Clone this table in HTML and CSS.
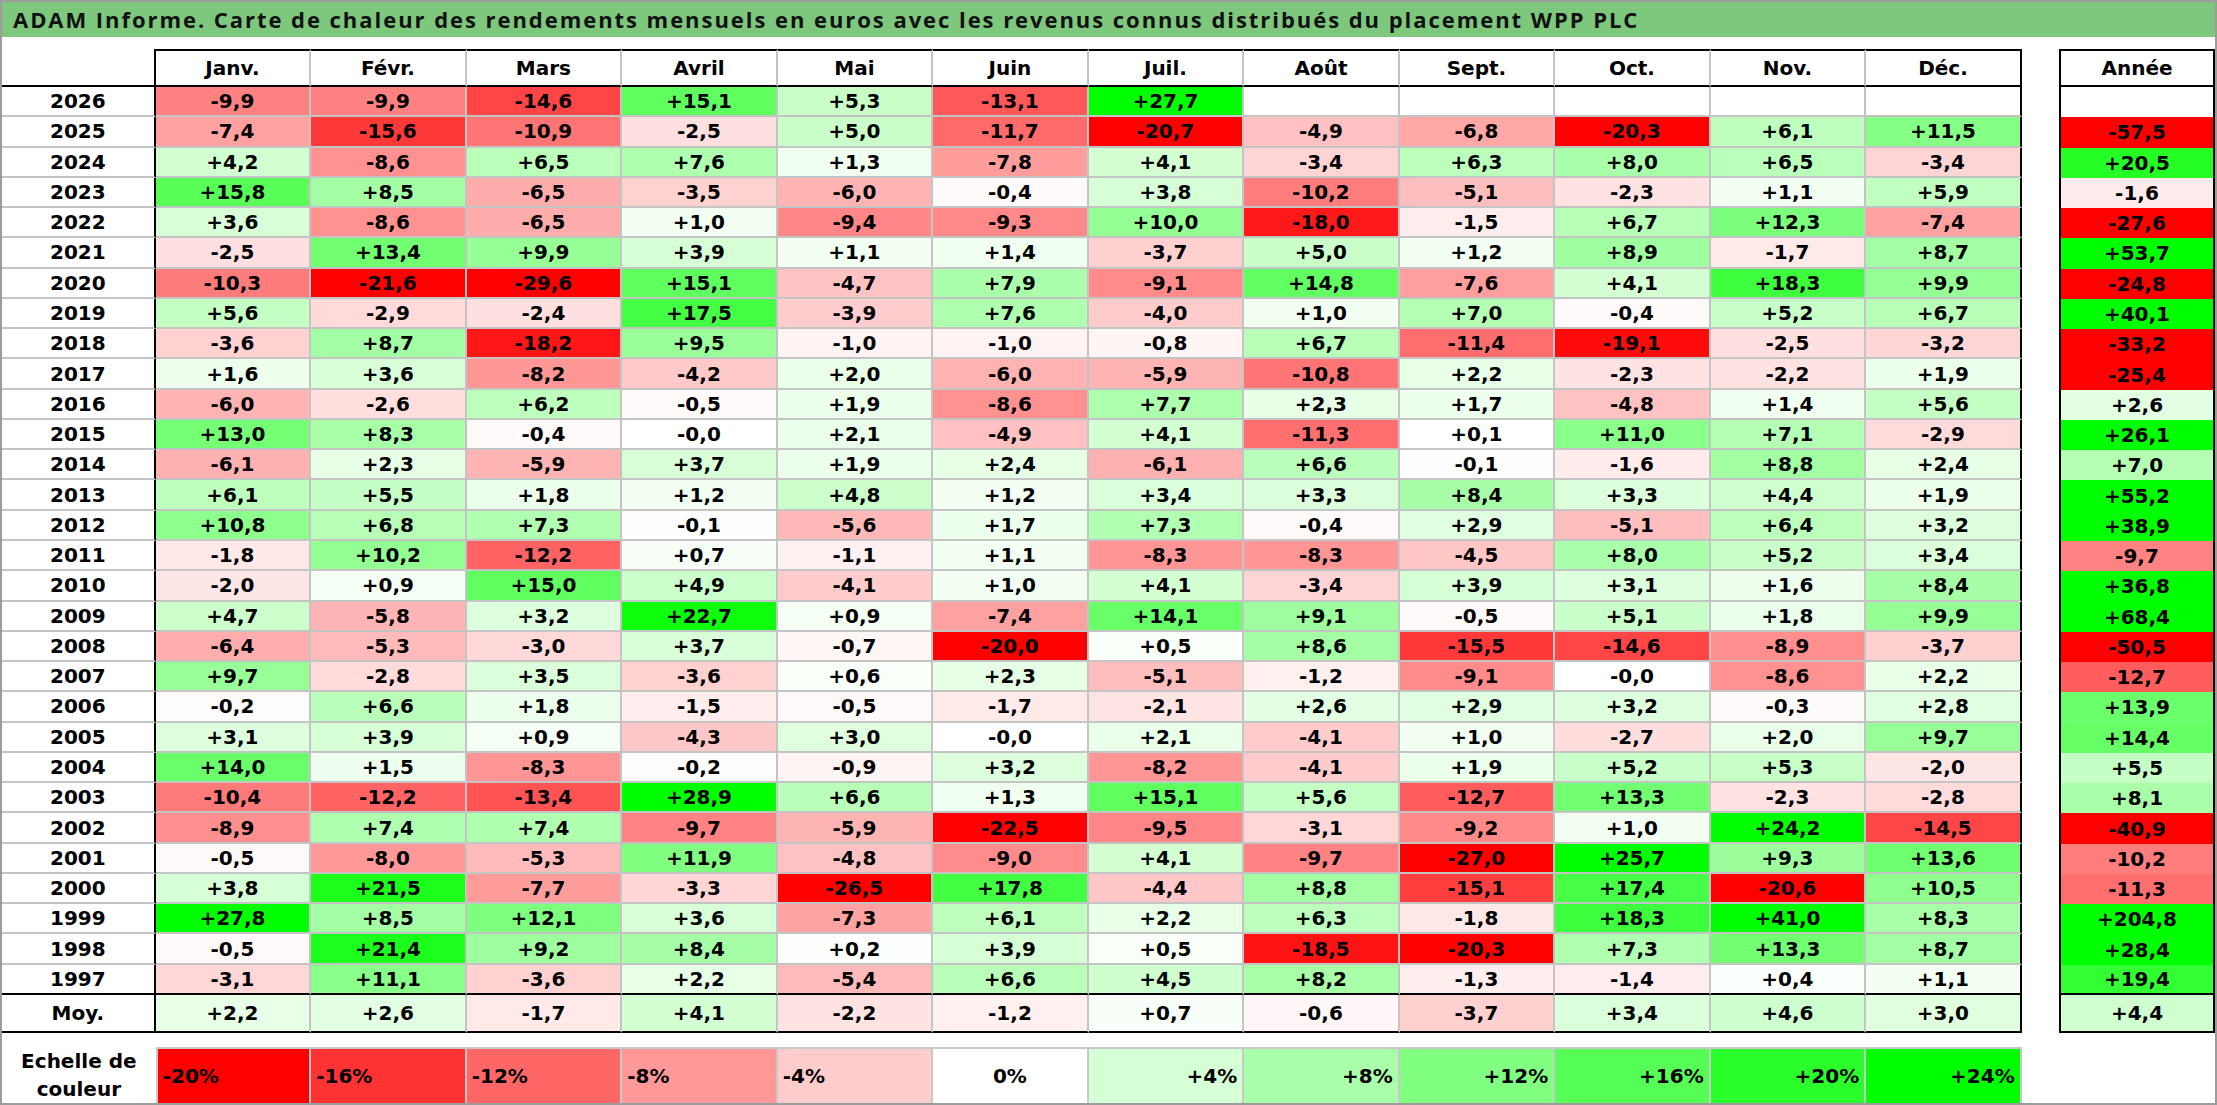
FILE: index.html
```html
<!DOCTYPE html>
<html lang="fr">
<head>
<meta charset="utf-8">
<title>ADAM Informe – WPP PLC</title>
<link rel="stylesheet" href="styles.css">
</head>
<body>
<div class="sheet">
  <header class="title">ADAM Informe. Carte de chaleur des rendements mensuels en euros avec les revenus connus distribués du placement WPP PLC</header>
  <div class="tables">
    <div class="main" id="main">
      <div class="c hd corner"></div>
      <div class="c hd">Janv.</div>
      <div class="c hd">Févr.</div>
      <div class="c hd">Mars</div>
      <div class="c hd">Avril</div>
      <div class="c hd">Mai</div>
      <div class="c hd">Juin</div>
      <div class="c hd">Juil.</div>
      <div class="c hd">Août</div>
      <div class="c hd">Sept.</div>
      <div class="c hd">Oct.</div>
      <div class="c hd">Nov.</div>
      <div class="c hd dec">Déc.</div>
    </div>
    <div class="annual" id="annual">
      <div class="c a hd">Année</div>
    </div>
  </div>
  <div class="legend">
    <div class="legend-label">Echelle de<br>couleur</div>
    <div class="lg neg l-20">-20%</div>
    <div class="lg neg l-16">-16%</div>
    <div class="lg neg l-12">-12%</div>
    <div class="lg neg l-8">-8%</div>
    <div class="lg neg l-4">-4%</div>
    <div class="lg zero">0%</div>
    <div class="lg pos l4">+4%</div>
    <div class="lg pos l8">+8%</div>
    <div class="lg pos l12">+12%</div>
    <div class="lg pos l16">+16%</div>
    <div class="lg pos l20">+20%</div>
    <div class="lg pos l24">+24%</div>
  </div>
</div>
<script src="app.js"></script>
</body>
</html>
```

FILE: styles.css
```css
* { box-sizing: border-box; margin: 0; padding: 0; }
html, body { margin: 0; background: #fff; }

.sheet {
  width: 2217px;
  height: 1105px;
  border: 2px solid #9c9c9c;
  display: flex;
  flex-direction: column;
  font-family: "DejaVu Sans", Verdana, sans-serif;
  font-weight: 700;
  font-size: 20px;
  color: #000;
  overflow: hidden;
  background: #fff;
}

.title {
  height: 35px;
  flex: none;
  background: #7ec87e;
  font-family: "Open Sans", "DejaVu Sans", sans-serif;
  font-size: 22px;
  letter-spacing: 1.95px;
  font-weight: 700;
  line-height: 35px;
  padding-left: 11px;
  white-space: nowrap;
  color: #111;
}

.tables {
  display: flex;
  gap: 37.3px;
  margin-top: 12px;
  flex: none;
}

.main {
  display: grid;
  grid-template-columns: 153.7px repeat(12, 155.5px);
  grid-template-rows: 38px repeat(30, 30.27px) 38px;
}

.annual {
  display: grid;
  grid-template-columns: 156px;
  grid-template-rows: 38px repeat(30, 30.27px) 38px;
}

.c {
  display: flex;
  align-items: center;
  justify-content: center;
  border-right: 2px solid #c4c4c4;
  border-bottom: 2px solid #c4c4c4;
  white-space: nowrap;
  background: #fff;
}

.hd {
  border-top: 2px solid #000;
  border-bottom: 2px solid #000;
}

.corner {
  border-top: none;
  border-right: 2px solid #000;
}

.yr { border-right: 2px solid #000; }
.dec { border-right: 2px solid #000; }
.last { border-bottom: 2px solid #000; }
.avg { border-bottom: 2px solid #000; }

.a {
  border-left: 2px solid #000;
  border-right: 2px solid #000;
  border-bottom: none;
}
.a.hd { border-bottom: 2px solid #000; }
.a.last, .a.avg { border-bottom: 2px solid #000; }

.legend {
  display: grid;
  grid-template-columns: 153.7px repeat(12, 155.5px);
  height: 56px;
  margin-top: 14px;
  flex: none;
}

.legend-label {
  display: flex;
  align-items: center;
  justify-content: center;
  text-align: center;
  line-height: 28px;
}

.lg {
  display: flex;
  align-items: center;
  border-top: 2px solid #c8c8c8;
  border-right: 2px solid #c8c8c8;
  white-space: nowrap;
}
.lg.l-20 { border-left: 2px solid #c8c8c8; }
.neg { justify-content: flex-start; padding-left: 5px; }
.pos { justify-content: flex-end; padding-right: 5px; }
.zero { justify-content: center; background: #fff; }

.l-20 { background: rgb(255, 0, 0); }
.l-16 { background: rgb(255, 51, 51); }
.l-12 { background: rgb(255, 102, 102); }
.l-8 { background: rgb(255, 153, 153); }
.l-4 { background: rgb(255, 204, 204); }
.l4 { background: rgb(213, 255, 213); }
.l8 { background: rgb(170, 255, 170); }
.l12 { background: rgb(128, 255, 128); }
.l16 { background: rgb(85, 255, 85); }
.l20 { background: rgb(43, 255, 43); }
.l24 { background: rgb(0, 255, 0); }
```

FILE: app.js
```js
(function () {
  var rows = [
    ["2026", "-9,9 -9,9 -14,6 +15,1 +5,3 -13,1 +27,7 . . . . .", ""],
    ["2025", "-7,4 -15,6 -10,9 -2,5 +5,0 -11,7 -20,7 -4,9 -6,8 -20,3 +6,1 +11,5", "-57,5"],
    ["2024", "+4,2 -8,6 +6,5 +7,6 +1,3 -7,8 +4,1 -3,4 +6,3 +8,0 +6,5 -3,4", "+20,5"],
    ["2023", "+15,8 +8,5 -6,5 -3,5 -6,0 -0,4 +3,8 -10,2 -5,1 -2,3 +1,1 +5,9", "-1,6"],
    ["2022", "+3,6 -8,6 -6,5 +1,0 -9,4 -9,3 +10,0 -18,0 -1,5 +6,7 +12,3 -7,4", "-27,6"],
    ["2021", "-2,5 +13,4 +9,9 +3,9 +1,1 +1,4 -3,7 +5,0 +1,2 +8,9 -1,7 +8,7", "+53,7"],
    ["2020", "-10,3 -21,6 -29,6 +15,1 -4,7 +7,9 -9,1 +14,8 -7,6 +4,1 +18,3 +9,9", "-24,8"],
    ["2019", "+5,6 -2,9 -2,4 +17,5 -3,9 +7,6 -4,0 +1,0 +7,0 -0,4 +5,2 +6,7", "+40,1"],
    ["2018", "-3,6 +8,7 -18,2 +9,5 -1,0 -1,0 -0,8 +6,7 -11,4 -19,1 -2,5 -3,2", "-33,2"],
    ["2017", "+1,6 +3,6 -8,2 -4,2 +2,0 -6,0 -5,9 -10,8 +2,2 -2,3 -2,2 +1,9", "-25,4"],
    ["2016", "-6,0 -2,6 +6,2 -0,5 +1,9 -8,6 +7,7 +2,3 +1,7 -4,8 +1,4 +5,6", "+2,6"],
    ["2015", "+13,0 +8,3 -0,4 -0,0 +2,1 -4,9 +4,1 -11,3 +0,1 +11,0 +7,1 -2,9", "+26,1"],
    ["2014", "-6,1 +2,3 -5,9 +3,7 +1,9 +2,4 -6,1 +6,6 -0,1 -1,6 +8,8 +2,4", "+7,0"],
    ["2013", "+6,1 +5,5 +1,8 +1,2 +4,8 +1,2 +3,4 +3,3 +8,4 +3,3 +4,4 +1,9", "+55,2"],
    ["2012", "+10,8 +6,8 +7,3 -0,1 -5,6 +1,7 +7,3 -0,4 +2,9 -5,1 +6,4 +3,2", "+38,9"],
    ["2011", "-1,8 +10,2 -12,2 +0,7 -1,1 +1,1 -8,3 -8,3 -4,5 +8,0 +5,2 +3,4", "-9,7"],
    ["2010", "-2,0 +0,9 +15,0 +4,9 -4,1 +1,0 +4,1 -3,4 +3,9 +3,1 +1,6 +8,4", "+36,8"],
    ["2009", "+4,7 -5,8 +3,2 +22,7 +0,9 -7,4 +14,1 +9,1 -0,5 +5,1 +1,8 +9,9", "+68,4"],
    ["2008", "-6,4 -5,3 -3,0 +3,7 -0,7 -20,0 +0,5 +8,6 -15,5 -14,6 -8,9 -3,7", "-50,5"],
    ["2007", "+9,7 -2,8 +3,5 -3,6 +0,6 +2,3 -5,1 -1,2 -9,1 -0,0 -8,6 +2,2", "-12,7"],
    ["2006", "-0,2 +6,6 +1,8 -1,5 -0,5 -1,7 -2,1 +2,6 +2,9 +3,2 -0,3 +2,8", "+13,9"],
    ["2005", "+3,1 +3,9 +0,9 -4,3 +3,0 -0,0 +2,1 -4,1 +1,0 -2,7 +2,0 +9,7", "+14,4"],
    ["2004", "+14,0 +1,5 -8,3 -0,2 -0,9 +3,2 -8,2 -4,1 +1,9 +5,2 +5,3 -2,0", "+5,5"],
    ["2003", "-10,4 -12,2 -13,4 +28,9 +6,6 +1,3 +15,1 +5,6 -12,7 +13,3 -2,3 -2,8", "+8,1"],
    ["2002", "-8,9 +7,4 +7,4 -9,7 -5,9 -22,5 -9,5 -3,1 -9,2 +1,0 +24,2 -14,5", "-40,9"],
    ["2001", "-0,5 -8,0 -5,3 +11,9 -4,8 -9,0 +4,1 -9,7 -27,0 +25,7 +9,3 +13,6", "-10,2"],
    ["2000", "+3,8 +21,5 -7,7 -3,3 -26,5 +17,8 -4,4 +8,8 -15,1 +17,4 -20,6 +10,5", "-11,3"],
    ["1999", "+27,8 +8,5 +12,1 +3,6 -7,3 +6,1 +2,2 +6,3 -1,8 +18,3 +41,0 +8,3", "+204,8"],
    ["1998", "-0,5 +21,4 +9,2 +8,4 +0,2 +3,9 +0,5 -18,5 -20,3 +7,3 +13,3 +8,7", "+28,4"],
    ["1997", "-3,1 +11,1 -3,6 +2,2 -5,4 +6,6 +4,5 +8,2 -1,3 -1,4 +0,4 +1,1", "+19,4"],
    ["Moy.", "+2,2 +2,6 -1,7 +4,1 -2,2 -1,2 +0,7 -0,6 -3,7 +3,4 +4,6 +3,0", "+4,4"]
  ];

  function colour(s) {
    if (!s) return "#fff";
    var v = parseFloat(s.replace(",", "."));
    var t, c;
    if (v < 0) {
      t = Math.min(-v / 20, 1);
      c = Math.round(255 * (1 - t));
      return "rgb(255," + c + "," + c + ")";
    }
    if (v > 0) {
      t = Math.min(v / 24, 1);
      c = Math.round(255 * (1 - t));
      return "rgb(" + c + ",255," + c + ")";
    }
    return "#fff";
  }

  function cell(parent, cls, text, bg) {
    var d = document.createElement("div");
    d.className = cls;
    d.textContent = text;
    if (bg) d.style.background = bg;
    parent.appendChild(d);
  }

  var main = document.getElementById("main");
  var annual = document.getElementById("annual");

  rows.forEach(function (r, i) {
    var extra = "";
    if (i === rows.length - 2) extra = " last";
    if (i === rows.length - 1) extra = " avg";
    cell(main, "c yr" + extra, r[0]);
    var vals = r[1].split(" ");
    vals.forEach(function (v, j) {
      var txt = v === "." ? "" : v;
      cell(main, "c m" + (j === 11 ? " dec" : "") + extra, txt, colour(txt));
    });
    cell(annual, "c a" + extra, r[2], colour(r[2]));
  });
})();
```
